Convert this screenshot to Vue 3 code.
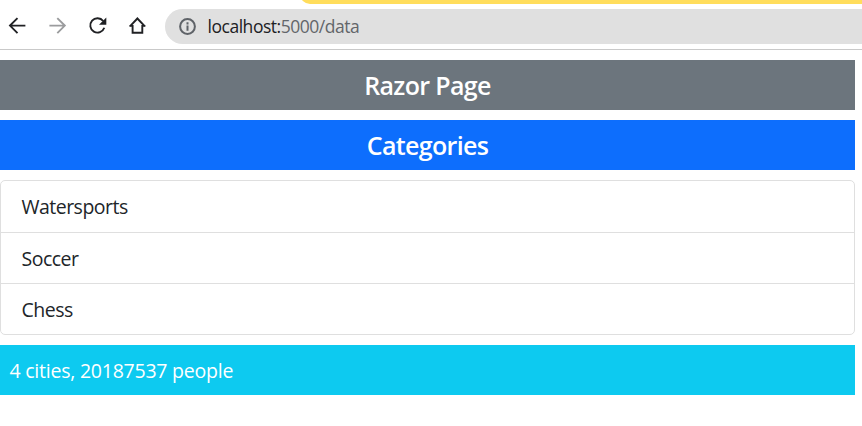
<script setup>
const categories = ['Watersports', 'Soccer', 'Chess']
</script>

<template>
  <div class="window">
    <div class="tabs"><div class="tab"></div></div>
    <header class="toolbar">
      <svg class="icon" viewBox="0 0 20 20"><path d="M18.4 9.6H3.2M10.5 2.1L3 9.6l7.5 7.5" /></svg>
      <svg class="icon muted" viewBox="0 0 20 20"><path d="M2.4 9.6h15.2M10.3 2.1l7.5 7.5-7.5 7.5" /></svg>
      <svg class="icon" viewBox="0 0 20 20">
        <path d="M16.2 5A7.2 7.2 0 1 0 17.3 11.8" /><path class="solid" d="M19.3 1.5v7.3h-7.3z" />
      </svg>
      <svg class="icon" viewBox="0 0 20 20"><path d="M2.9 10.4L10.4 2.5l7.5 7.9M2.4 9.9h3.2v6.8h9.7V9.9h3.1" /></svg>
      <div class="address">
        <svg class="info" viewBox="0 0 18 18">
          <circle cx="9" cy="9" r="7" /><path d="M9 8v5M9 5v2" />
        </svg>
        <span class="url"><b>localhost:</b>5000/data</span>
      </div>
    </header>
    <main>
      <h5 class="bar secondary">Razor Page</h5>
      <h5 class="bar primary">Categories</h5>
      <ul class="list">
        <li v-for="c in categories" :key="c">{{ c }}</li>
      </ul>
      <div class="bar summary">4 cities, 20187537 people</div>
    </main>
  </div>
</template>

<style>
body { background: #fff; overflow: hidden; }
</style>

<style scoped>
* { box-sizing: border-box; }
.window { height: 426px; font-family: "Open Sans", "Noto Sans", sans-serif; color: #212529; }
.tabs { height: 4px; padding-left: 300px; overflow: hidden; }
.tab { height: 14px; margin-top: -10px; border-radius: 0 0 0 10px; background: #ffdd5c; }
.toolbar { height: 46px; display: flex; align-items: center; gap: 20px; padding: 0 0 1px 7px; border-bottom: 1px solid #c9c9c9; }
.icon { width: 20px; height: 20px; flex: none; fill: none; stroke: #202124; stroke-width: 1.9; }
.muted { stroke: #9b9c9e; }
.solid { fill: #202124; stroke: none; }
.address { height: 35px; flex: 1; margin-left: -2px; padding-left: 13px; display: flex; align-items: center; border-radius: 18px 0 0 18px; background: #e0e0e0; }
.info { width: 19px; height: 19px; fill: none; stroke: #5f6368; stroke-width: 1.9; }
.url { margin-left: 10.5px; font-size: 17.5px; letter-spacing: -0.47px; color: #63666a; line-height: 35px; }
.url b { font-weight: 400; color: #202124; }
main { width: 855px; padding-top: 10px; }
.bar { height: 50px; margin: 0; color: #fff; }
h5.bar { text-align: center; font-size: 25px; font-weight: 600; letter-spacing: -0.65px; line-height: 50px; margin-bottom: 10px; }
.secondary { background: #6c757d; }
.primary { background: #0d6efd; }
.list { list-style: none; height: 155px; margin: 0 0 10px; padding: 0; border: 1px solid #dfdfdf; border-radius: 5px; }
.list li { height: 51px; padding-left: 20.5px; font-size: 19.5px; letter-spacing: -0.52px; line-height: 52px; }
.list li:first-child { height: 52px; }
.list li:not(:last-child) { border-bottom: 1px solid #dfdfdf; }
.summary { padding-left: 9.5px; font-size: 19.5px; letter-spacing: -0.23px; line-height: 52px; background: #0dcaf0; }
</style>
